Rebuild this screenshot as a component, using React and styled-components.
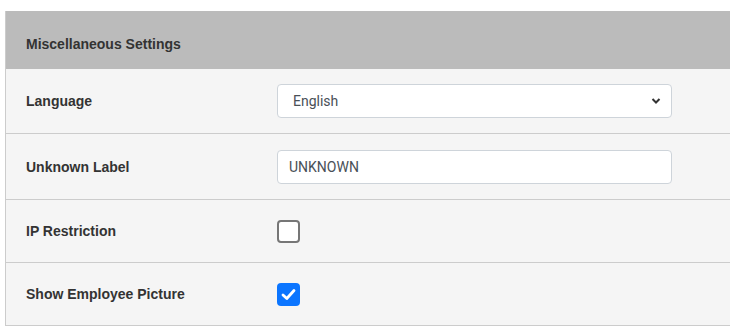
import React from "react";
import styled, { createGlobalStyle } from "styled-components";

const Global = createGlobalStyle`
  html, body { margin: 0; padding: 0; background: #ffffff; }
  body { font-family: "Liberation Sans", Arial, sans-serif; }
`;

const Page = styled.div`
  padding: 11px 0 0 5px;
  width: 760px;
`;

const Panel = styled.section`
  border: 1px solid #cccccc;
  border-top: none;
  border-right: none;
  background: #f5f5f5;
`;

const Header = styled.div`
  background: #bbbbbb;
  height: 58px;
  box-sizing: border-box;
  display: flex;
  align-items: center;
  padding: 8px 20px 0;
  font-size: 14px;
  font-weight: bold;
  color: #333333;
`;

const Row = styled.div`
  display: grid;
  grid-template-columns: 251px 395px;
  align-items: center;
  padding: 0 20px;
  height: ${(p) => p.$h}px;
  border-top: ${(p) => (p.$first ? "none" : "1px solid #cccccc")};
`;

const Label = styled.label`
  font-size: 14px;
  font-weight: bold;
  color: #333333;
`;

const Select = styled.div`
  height: 34px;
  box-sizing: border-box;
  border: 1px solid #ced4da;
  border-radius: 4px;
  background: #ffffff;
  display: flex;
  align-items: center;
  justify-content: space-between;
  padding: 0 10px 0 15px;
  font-family: Roboto, "Liberation Sans", sans-serif;
  font-size: 14px;
  color: #495057;
`;

const Input = styled.div`
  height: 34px;
  box-sizing: border-box;
  border: 1px solid #ced4da;
  border-radius: 4px;
  background: #ffffff;
  display: flex;
  align-items: center;
  padding: 0 11px;
  font-family: Roboto, "Liberation Sans", sans-serif;
  font-size: 14px;
  color: #495057;
`;

const Check = styled.div`
  width: 23px;
  height: 23px;
  box-sizing: border-box;
  border-radius: 4px;
  border: ${(p) => (p.$on ? "none" : "2px solid #767676")};
  background: ${(p) => (p.$on ? "#0b75ff" : "#ffffff")};
  display: flex;
  align-items: center;
  justify-content: center;
`;

export default function App() {
  return (
    <>
      <Global />
      <Page>
        <Panel>
          <Header>Miscellaneous Settings</Header>
          <Row $first $h={64}>
            <Label>Language</Label>
            <Select>
              <span>English</span>
              <svg width="10" height="8" viewBox="0 0 10 8">
                <path d="M1.5 2 L5 5.5 L8.5 2" fill="none" stroke="#333" strokeWidth="2" />
              </svg>
            </Select>
          </Row>
          <Row $h={65}>
            <Label>Unknown Label</Label>
            <Input>UNKNOWN</Input>
          </Row>
          <Row $h={62}>
            <Label>IP Restriction</Label>
            <Check />
          </Row>
          <Row $h={62}>
            <Label>Show Employee Picture</Label>
            <Check $on>
              <svg width="15" height="13" viewBox="0 0 15 13">
                <path d="M2 7 L5.8 10.5 L13 2.5" fill="none" stroke="#fff" strokeWidth="2.8" strokeLinecap="round" strokeLinejoin="round" />
              </svg>
            </Check>
          </Row>
        </Panel>
      </Page>
    </>
  );
}
